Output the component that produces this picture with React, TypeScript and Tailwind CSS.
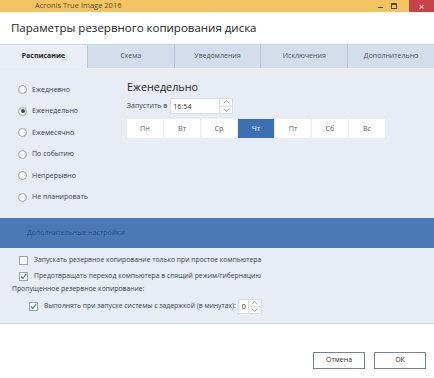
const font = { fontFamily: '"Open Sans", "Noto Sans", sans-serif' }

const tabs = ['Расписание', 'Схема', 'Уведомления', 'Исключения', 'Дополнительно']
const modes = ['Ежедневно', 'Еженедельно', 'Ежемесячно', 'По событию', 'Непрерывно', 'Не планировать']
const days = ['Пн', 'Вт', 'Ср', 'Чт', 'Пт', 'Сб', 'Вс']

function Radio({ label, checked }: { label: string; checked?: boolean }) {
  return (
    <div className="flex items-center h-[21.5px] gap-[5px]">
      <span className="w-[9px] h-[9px] rounded-full border border-[#9aa3b0] bg-white flex items-center justify-center">
        {checked && <span className="w-[4px] h-[4px] rounded-full bg-[#3a4a60]" />}
      </span>
      <span className="text-[7px] text-[#3a4250]">{label}</span>
    </div>
  )
}

function Check({ label, checked }: { label: string; checked?: boolean }) {
  return (
    <div className="flex items-center gap-[6px]">
      <span className="w-[9px] h-[9px] border border-[#9aa3b0] bg-white flex items-center justify-center">
        {checked && (
          <svg width="7" height="7" viewBox="0 0 7 7">
            <path d="M1 3.5 L3 5.5 L6 1" fill="none" stroke="#3b6db0" strokeWidth="1.1" />
          </svg>
        )}
      </span>
      <span className="text-[6.8px] text-[#3a4250]">{label}</span>
    </div>
  )
}

function Spinner() {
  return (
    <div className="flex flex-col w-[13px] border-l border-[#d8dde6]">
      <div className="flex-1 flex items-center justify-center border-b border-[#d8dde6]">
        <svg width="7" height="4" viewBox="0 0 7 4">
          <path d="M0.5 3.5 L3.5 0.5 L6.5 3.5" fill="none" stroke="#9aa3b0" strokeWidth="0.8" />
        </svg>
      </div>
      <div className="flex-1 flex items-center justify-center">
        <svg width="7" height="4" viewBox="0 0 7 4">
          <path d="M0.5 0.5 L3.5 3.5 L6.5 0.5" fill="none" stroke="#9aa3b0" strokeWidth="0.8" />
        </svg>
      </div>
    </div>
  )
}

export default function App() {
  return (
    <div className="w-[434px] h-[378px] flex flex-col bg-white overflow-hidden" style={font}>
      {/* title bar */}
      <div className="h-[12px] bg-[#f3c462] flex items-center">
        <span className="ml-[35px] text-[7.5px] leading-none text-[#5a4a2a]">Acronis True Image 2016</span>
        <div className="ml-auto flex items-center h-full">
          <span className="w-[5px] h-[1.5px] bg-[#5a4a2a] mt-[3px] mr-[8px]" />
          <span className="w-[6px] h-[6px] border border-[#5a4a2a] border-t-2 mr-[12px]" />
          <div className="w-[25px] h-full bg-[#c8424a] flex items-center justify-center text-white text-[9px] leading-none">×</div>
        </div>
      </div>

      {/* heading */}
      <div className="h-[32px] flex items-center pl-[11px]">
        <span className="text-[11.5px] text-[#222]">Параметры резервного копирования диска</span>
      </div>

      {/* tabs */}
      <div className="h-[24px] grid grid-cols-5 bg-[#d3ddec] border-t border-[#c8d2e2]">
        {tabs.map((t, i) => (
          <div
            key={t}
            className={
              i === 0
                ? 'flex items-center justify-center bg-[#eaeef6] text-[7px] font-bold text-[#222]'
                : 'flex items-center justify-center border-l border-[#b9c6da] text-[7px] text-[#4a5260]'
            }
          >
            {t}
          </div>
        ))}
      </div>

      {/* body */}
      <div className="flex-1 bg-[#e8ecf4] flex flex-col border-b border-[#cfd3dc]">
        <div className="flex h-[150px]">
          <div className="w-[127px] pl-[18px] pt-[11px]">
            {modes.map((m, i) => (
              <Radio key={m} label={m} checked={i === 1} />
            ))}
          </div>
          <div className="pt-[11px]">
            <div className="text-[10.8px] text-[#222] leading-[16px]">Еженедельно</div>
            <div className="flex items-center mt-[3px] gap-[3px]">
              <span className="text-[7px] text-[#3a4250]">Запустить в</span>
              <div className="w-[63px] h-[16px] bg-white border border-[#d8dde6] flex">
                <span className="flex-1 text-[7.2px] text-[#333] pl-[2px] leading-[14px]">16:54</span>
                <Spinner />
              </div>
            </div>
            <div className="flex gap-[1px] mt-[5px]">
              {days.map((d) => (
                <div
                  key={d}
                  className={
                    d === 'Чт'
                      ? 'w-[36px] h-[19px] bg-[#3e6fb2] text-white text-[7.2px] flex items-center justify-center'
                      : 'w-[36px] h-[19px] bg-white text-[#5a6270] text-[7.2px] flex items-center justify-center'
                  }
                >
                  {d}
                </div>
              ))}
            </div>
          </div>
        </div>

        <div className="h-[30px] bg-[#4a79b6] flex items-center pl-[27px]">
          <span className="text-[7px] text-[#25508c]">Дополнительные настройки</span>
        </div>

        <div className="pl-[19px] pt-[7px] flex flex-col gap-[6px]">
          <Check label="Запускать резервное копирование только при простое компьютера" />
          <Check label="Предотвращать переход компьютера в спящий режим/гибернацию" checked />
        </div>
        <div className="pl-[12px] mt-[3px] text-[6.8px] text-[#3a4250]">Пропущенное резервное копирование:</div>
        <div className="pl-[29px] mt-[4px] flex items-center gap-[2px]">
          <Check label="Выполнять при запуске системы с задержкой (в минутах):" checked />
          <div className="w-[24px] h-[15px] bg-white border border-[#d8dde6] flex">
            <span className="flex-1 text-[7.2px] text-[#333] pl-[3px] leading-[13px]">0</span>
            <Spinner />
          </div>
        </div>
      </div>

      {/* footer */}
      <div className="h-[54px] flex items-end justify-end gap-[9px] pr-[8px] pb-[9px]">
        <button className="w-[52px] h-[17px] border border-[#7a8290] bg-white text-[7px] text-[#333]">Отмена</button>
        <button className="w-[52px] h-[17px] border border-[#7a8290] bg-white text-[7px] text-[#333]">ОК</button>
      </div>
    </div>
  )
}
